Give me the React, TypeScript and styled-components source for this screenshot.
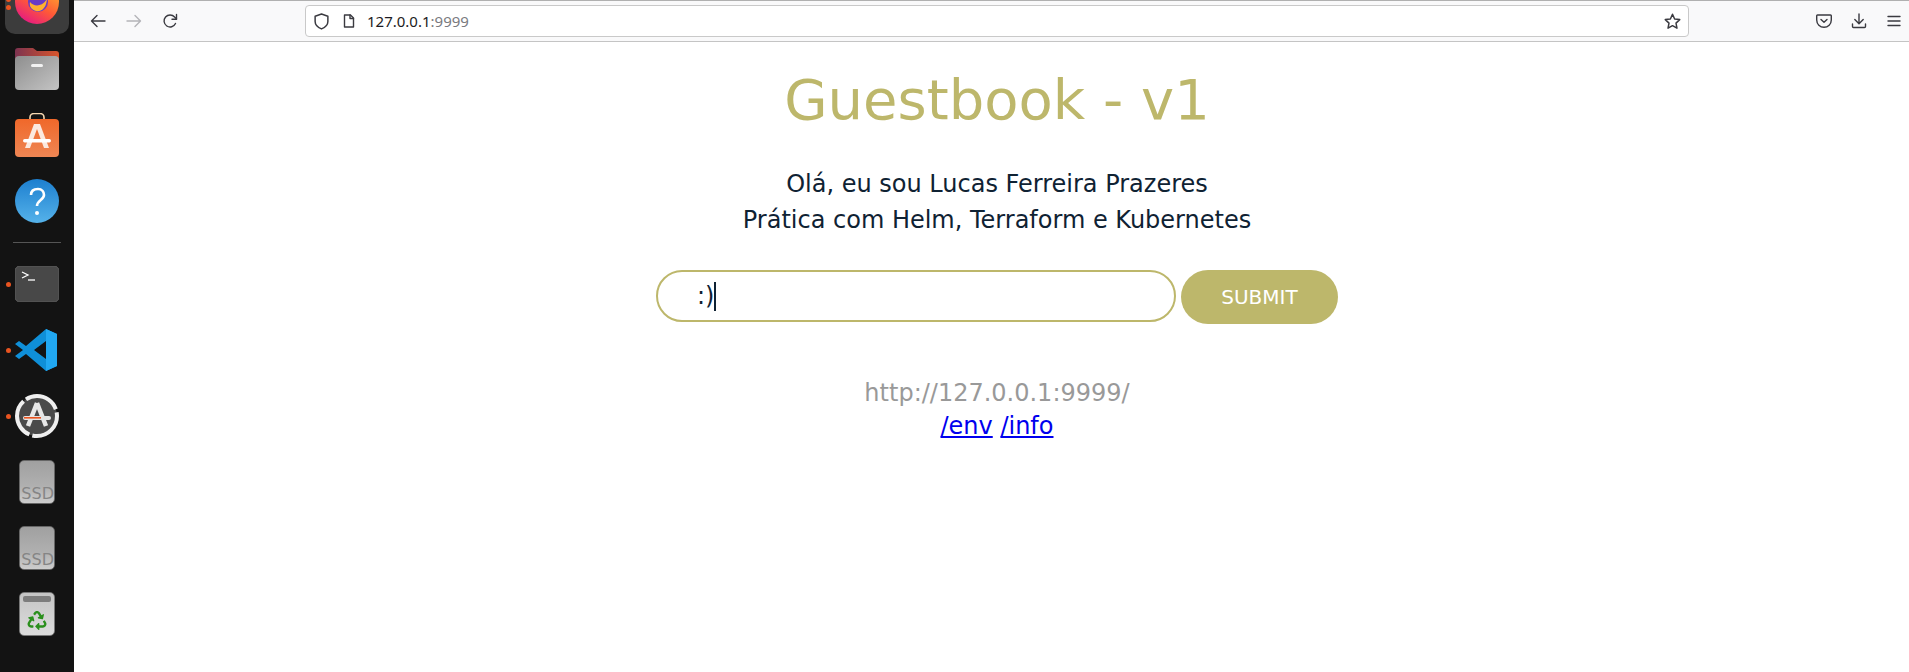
import React from 'react';
import styled, { createGlobalStyle } from 'styled-components';
import { FaRecycle } from 'react-icons/fa';

const GlobalStyle = createGlobalStyle`
  html, body {
    margin: 0;
    padding: 0;
    height: 100%;
    background: #fff;
  }
  body {
    font-family: 'DejaVu Sans', sans-serif;
    overflow: hidden;
  }
`;

const Desktop = styled.div`
  display: flex;
  width: 1909px;
  height: 672px;
  overflow: hidden;
`;

const Dock = styled.div`
  flex: 0 0 74px;
  height: 702px;
  margin-top: -30px;
  background: #131313;
  display: flex;
  flex-direction: column;
  align-items: center;
`;

const DockSlot = styled.div`
  position: relative;
  flex: 0 0 66px;
  width: 64px;
  display: flex;
  align-items: center;
  justify-content: center;
`;

const ActiveSlot = styled(DockSlot)`
  box-sizing: border-box;
  flex: 0 0 64px;
  margin-bottom: 2px;
  border-radius: 10px;
  background: #3c3c3c;
`;

const RunDot = styled.span<{ $top?: number }>`
  position: absolute;
  left: 1px;
  top: ${(p) => (p.$top !== undefined ? `${p.$top}px` : '31px')};
  width: 5px;
  height: 5px;
  border-radius: 50%;
  background: #e95420;
`;

const DockSeparator = styled.div`
  flex: 0 0 17px;
  width: 100%;
  display: flex;
  align-items: center;
  justify-content: center;
  &::after {
    content: '';
    width: 48px;
    height: 1px;
    background: #555;
  }
`;

const DriveTile = styled.div`
  width: 36px;
  height: 44px;
  border-radius: 5px;
  box-sizing: border-box;
  border: 1px solid #666;
  background: linear-gradient(180deg, #a0a0a0 0%, #b0b0b0 60%, #cdcdcd 100%);
  display: flex;
  align-items: flex-end;
  justify-content: flex-end;
`;

const DriveLabel = styled.span`
  font-size: 16px;
  line-height: 19px;
  color: #858585;
`;

const TrashTile = styled.div`
  width: 36px;
  height: 44px;
  box-sizing: border-box;
  border: 1px solid #777;
  border-radius: 5px;
  padding: 3px;
  background: linear-gradient(180deg, #c4c4c4 0%, #dcdcdc 100%);
  display: flex;
  flex-direction: column;
  align-items: center;
`;

const TrashLid = styled.div`
  align-self: stretch;
  flex: 0 0 6px;
  border-radius: 2px;
  background: #7d7d7d;
  margin-bottom: 9px;
`;

const RecycleMark = styled(FaRecycle)`
  width: 20px;
  height: 19px;
  color: #2a8f1c;
`;

const Browser = styled.div`
  flex: 1;
  min-width: 0;
  display: flex;
  flex-direction: column;
`;

const Toolbar = styled.div`
  flex: 0 0 42px;
  box-sizing: border-box;
  display: flex;
  align-items: center;
  background: #f9f9fa;
  border-top: 1px solid #b0b0b0;
  border-bottom: 1px solid #c4c4c4;
  padding: 0 2px 0 6px;
`;

const NavButton = styled.div`
  flex: 0 0 36px;
  height: 32px;
  display: flex;
  align-items: center;
  justify-content: center;
`;

const UrlBar = styled.div`
  flex: 1;
  height: 32px;
  box-sizing: border-box;
  margin: 0 122px 0 117px;
  display: flex;
  align-items: center;
  background: #fff;
  border: 1px solid #c9c9c9;
  border-radius: 4px;
  padding: 0 5px 0 4px;
`;

const UrlIcon = styled.span`
  flex: 0 0 22px;
  display: flex;
  align-items: center;
  justify-content: center;
`;

const PageGlyph = styled(UrlIcon)`
  margin-left: 6px;
`;

const UrlText = styled.div`
  flex: 1;
  margin-left: 7px;
  font-family: 'Noto Sans', sans-serif;
  font-size: 15px;
  color: #1c1b22;
`;

const UrlPort = styled.span`
  color: #7a7a80;
`;

const AppButtons = styled.div`
  display: flex;
  align-items: center;
  gap: 9px;
`;

const AppButton = styled.div`
  flex: 0 0 26px;
  height: 32px;
  display: flex;
  align-items: center;
  justify-content: center;
`;

const Page = styled.main`
  flex: 1;
  display: flex;
  flex-direction: column;
  align-items: center;
  padding-left: 11px;
  background: #fff;
`;

const Title = styled.h1`
  margin: 25px 0 0;
  font-size: 56px;
  line-height: 66px;
  font-weight: 400;
  color: #bdb76b;
`;

const Intro = styled.div`
  margin-top: 33px;
  font-size: 24px;
  line-height: 36px;
  color: #0f2233;
  text-align: center;
`;

const GuestForm = styled.div`
  margin-top: 32px;
  display: flex;
  align-items: flex-start;
  gap: 5px;
`;

const EntryBox = styled.div`
  width: 520px;
  height: 52px;
  box-sizing: border-box;
  border: 2px solid #bdb76b;
  border-radius: 26px;
  padding-left: 39px;
  display: flex;
  align-items: center;
  font-size: 24px;
  color: #0f2233;
`;

const Caret = styled.span`
  width: 2px;
  height: 29px;
  background: #0f2233;
`;

const SubmitButton = styled.button`
  width: 157px;
  height: 54px;
  border: 0;
  border-radius: 27px;
  background: #bdb76b;
  color: #fff;
  font-family: inherit;
  font-size: 20px;
  padding: 0;
`;

const Footer = styled.div`
  margin-top: 53px;
  font-size: 24px;
  line-height: 33px;
  text-align: center;
`;

const HostLine = styled.div`
  color: #999;
`;

const EnvLink = styled.a`
  color: #0000ee;
  text-decoration: underline;
`;

const ic = { fill: 'none', stroke: '#3a3a40', strokeWidth: 1.4, strokeLinecap: 'round', strokeLinejoin: 'round' } as const;

const FirefoxIcon = () => (
  <svg width="48" height="48" viewBox="0 0 48 48">
    <defs>
      <linearGradient id="ff" x1="0.8" y1="0" x2="0.2" y2="1">
        <stop offset="0" stopColor="#ffbd2e" />
        <stop offset="0.55" stopColor="#ff5a36" />
        <stop offset="1" stopColor="#e3148a" />
      </linearGradient>
    </defs>
    <circle cx="24" cy="24" r="22" fill="url(#ff)" />
    <circle cx="25" cy="24" r="10" fill="#6a3bc4" />
    <path d="M17 24c4 5 12 5 17-3-1 10-6 13-11 12-4-1-7-4-6-9z" fill="#ffb02e" />
  </svg>
);

const FolderIcon = () => (
  <svg width="44" height="42" viewBox="0 0 44 42">
    <defs>
      <linearGradient id="fb" x1="0" y1="0" x2="1" y2="0">
        <stop offset="0" stopColor="#7d3350" />
        <stop offset="1" stopColor="#d8552c" />
      </linearGradient>
      <linearGradient id="fg" x1="0" y1="0" x2="1" y2="1">
        <stop offset="0" stopColor="#8e8e8e" />
        <stop offset="1" stopColor="#c4c4c4" />
      </linearGradient>
    </defs>
    <path d="M0 12V3a3 3 0 0 1 3-3h15l4 3h19a3 3 0 0 1 3 3v10H0z" fill="url(#fb)" />
    <rect x="0" y="8" width="44" height="34" rx="4" fill="url(#fg)" />
    <rect x="16" y="16" width="12" height="3" rx="1.5" fill="#f2f2f2" />
  </svg>
);

const StoreIcon = () => (
  <svg width="44" height="44" viewBox="0 0 44 44">
    <defs>
      <linearGradient id="sb" x1="0" y1="0" x2="0" y2="1">
        <stop offset="0" stopColor="#f0682a" />
        <stop offset="1" stopColor="#ee8654" />
      </linearGradient>
    </defs>
    <path d="M15 6.500V4.500a4 4 0 0 1 4-4h6a4 4 0 0 1 4 4v2" fill="none" stroke="#f5d7b0" strokeWidth="1.6" />
    <rect x="0" y="6" width="44" height="38" rx="4" fill="url(#sb)" />
    <path d="M19 11h6l9 24h-5l-7-19-7 19h-5z" fill="#fbe9df" />
    <rect x="8" y="26" width="28" height="3.500" rx="1.700" fill="#fff" />
  </svg>
);

const HelpIcon = () => (
  <svg width="44" height="44" viewBox="0 0 44 44">
    <defs>
      <linearGradient id="hb" x1="0" y1="0" x2="0" y2="1">
        <stop offset="0" stopColor="#1d7fcf" />
        <stop offset="1" stopColor="#55b2ea" />
      </linearGradient>
    </defs>
    <circle cx="22" cy="22" r="22" fill="url(#hb)" />
    <path d="M16 16c0-4 3-6 7-6s6 3 6 6c0 5-7 5-7 11" fill="none" stroke="#fff" strokeWidth="2.600" />
    <circle cx="22" cy="34" r="2" fill="#fff" />
  </svg>
);

const TerminalIcon = () => (
  <svg width="44" height="36" viewBox="0 0 44 36">
    <rect width="44" height="36" rx="5" fill="#484848" stroke="#5d5d5d" />
    <path d="M7 6l6 3-6 3" fill="none" stroke="#fff" strokeWidth="1.300" />
    <path d="M13 14h7" stroke="#fff" strokeWidth="1.300" />
  </svg>
);

const VsCodeIcon = () => (
  <svg width="44" height="42" viewBox="0 0 44 42">
    <path d="M31 0l11 5v32l-11 5-20-17-7 5-4-3 8-6-8-6 4-3 7 5L31 0zm0 12L19 21l12 9V12z" fill="#0f8fd8" />
    <path d="M31 0l11 5v32l-11 5V0z" fill="#21a8f2" />
  </svg>
);

const UpdaterIcon = () => (
  <svg width="46" height="46" viewBox="0 0 46 46">
    <circle cx="23" cy="23" r="20" fill="#4a4a4a" stroke="#efefef" strokeWidth="4" strokeDasharray="36 3 40 3" />
    <path d="M23 10l-9 23M23 10l9 23" stroke="#e8e8e8" strokeWidth="4.500" fill="none" />
    <rect x="9" y="23" width="28" height="4" rx="2" fill="#e5e5e5" />
    <rect x="10" y="24" width="17" height="1.600" fill="#e95420" />
  </svg>
);

const BackIcon = () => (
  <svg width="16" height="16" viewBox="0 0 16 16" {...ic}>
    <path d="M15 8H1.500M7 2.500 1.500 8 7 13.500" />
  </svg>
);

const ForwardIcon = () => (
  <svg width="16" height="16" viewBox="0 0 16 16" {...ic} stroke="#b4b4b8">
    <path d="M1 8h13.500M9 2.500 14.500 8 9 13.500" />
  </svg>
);

const ReloadIcon = () => (
  <svg width="16" height="16" viewBox="0 0 16 16" {...ic}>
    <path d="M13.500 10.500A6 6 0 1 1 12.600 4L14.500 6" />
    <path d="M14.500 1.500v4.700H10" />
  </svg>
);

const ShieldIcon = () => (
  <svg width="17" height="17" viewBox="0 0 16 16" {...ic}>
    <path d="M8 1 2 3v5c0 3 2.500 5.500 6 7 3.500-1.500 6-4 6-7V3L8 1z" />
  </svg>
);

const PageIcon = () => (
  <svg width="14" height="14" viewBox="0 0 14 14" {...ic}>
    <path d="M2.500 1h6l3 3v9h-9V1z" />
    <path d="M8 1v3.500h3.500" />
  </svg>
);

const StarIcon = () => (
  <svg width="17" height="17" viewBox="0 0 16 16" {...ic}>
    <path d="M8 1.200l2 4.400 4.800.6-3.500 3.300.9 4.800L8 11.900l-4.200 2.400.9-4.800L1.200 6.200 6 5.600 8 1.200z" />
  </svg>
);

const PocketIcon = () => (
  <svg width="16" height="16" viewBox="0 0 16 16" {...ic}>
    <path d="M1.500 2h13a.8.8 0 0 1 .8.8V7a7.300 7.300 0 0 1-14.600 0V2.800a.8.8 0 0 1 .8-.8z" />
    <path d="M5 6.500 8 9.300l3-2.800" />
  </svg>
);

const DownloadIcon = () => (
  <svg width="16" height="16" viewBox="0 0 16 16" {...ic}>
    <path d="M8 1v9.500M3.800 6.500 8 10.700l4.200-4.200" />
    <path d="M1.500 11v2.500a1 1 0 0 0 1 1h11a1 1 0 0 0 1-1V11" />
  </svg>
);

const MenuIcon = () => (
  <svg width="16" height="16" viewBox="0 0 16 16" {...ic}>
    <path d="M2 3.500h12M2 8h12M2 12.500h12" />
  </svg>
);

const App = () => (
  <Desktop>
    <GlobalStyle />
    <Dock>
      <ActiveSlot>
        <RunDot $top={27} />
        <RunDot $top={35} />
        <FirefoxIcon />
      </ActiveSlot>
      <DockSlot>
        <FolderIcon />
      </DockSlot>
      <DockSlot>
        <StoreIcon />
      </DockSlot>
      <DockSlot>
        <HelpIcon />
      </DockSlot>
      <DockSeparator />
      <DockSlot>
        <RunDot />
        <TerminalIcon />
      </DockSlot>
      <DockSlot>
        <RunDot />
        <VsCodeIcon />
      </DockSlot>
      <DockSlot>
        <RunDot />
        <UpdaterIcon />
      </DockSlot>
      <DockSlot>
        <DriveTile>
          <DriveLabel>SSD</DriveLabel>
        </DriveTile>
      </DockSlot>
      <DockSlot>
        <DriveTile>
          <DriveLabel>SSD</DriveLabel>
        </DriveTile>
      </DockSlot>
      <DockSlot>
        <TrashTile>
          <TrashLid />
          <RecycleMark />
        </TrashTile>
      </DockSlot>
    </Dock>
    <Browser>
      <Toolbar>
        <NavButton>
          <BackIcon />
        </NavButton>
        <NavButton>
          <ForwardIcon />
        </NavButton>
        <NavButton>
          <ReloadIcon />
        </NavButton>
        <UrlBar>
          <UrlIcon>
            <ShieldIcon />
          </UrlIcon>
          <PageGlyph>
            <PageIcon />
          </PageGlyph>
          <UrlText>
            127.0.0.1<UrlPort>:9999</UrlPort>
          </UrlText>
          <UrlIcon>
            <StarIcon />
          </UrlIcon>
        </UrlBar>
        <AppButtons>
          <AppButton>
            <PocketIcon />
          </AppButton>
          <AppButton>
            <DownloadIcon />
          </AppButton>
          <AppButton>
            <MenuIcon />
          </AppButton>
        </AppButtons>
      </Toolbar>
      <Page>
        <Title>Guestbook - v1</Title>
        <Intro>
          <div>Olá, eu sou Lucas Ferreira Prazeres</div>
          <div>Prática com Helm, Terraform e Kubernetes</div>
        </Intro>
        <GuestForm>
          <EntryBox>
            :)
            <Caret />
          </EntryBox>
          <SubmitButton>SUBMIT</SubmitButton>
        </GuestForm>
        <Footer>
          <HostLine>http://127.0.0.1:9999/</HostLine>
          <div>
            <EnvLink href="#env">/env</EnvLink> <EnvLink href="#info">/info</EnvLink>
          </div>
        </Footer>
      </Page>
    </Browser>
  </Desktop>
);

export default App;
